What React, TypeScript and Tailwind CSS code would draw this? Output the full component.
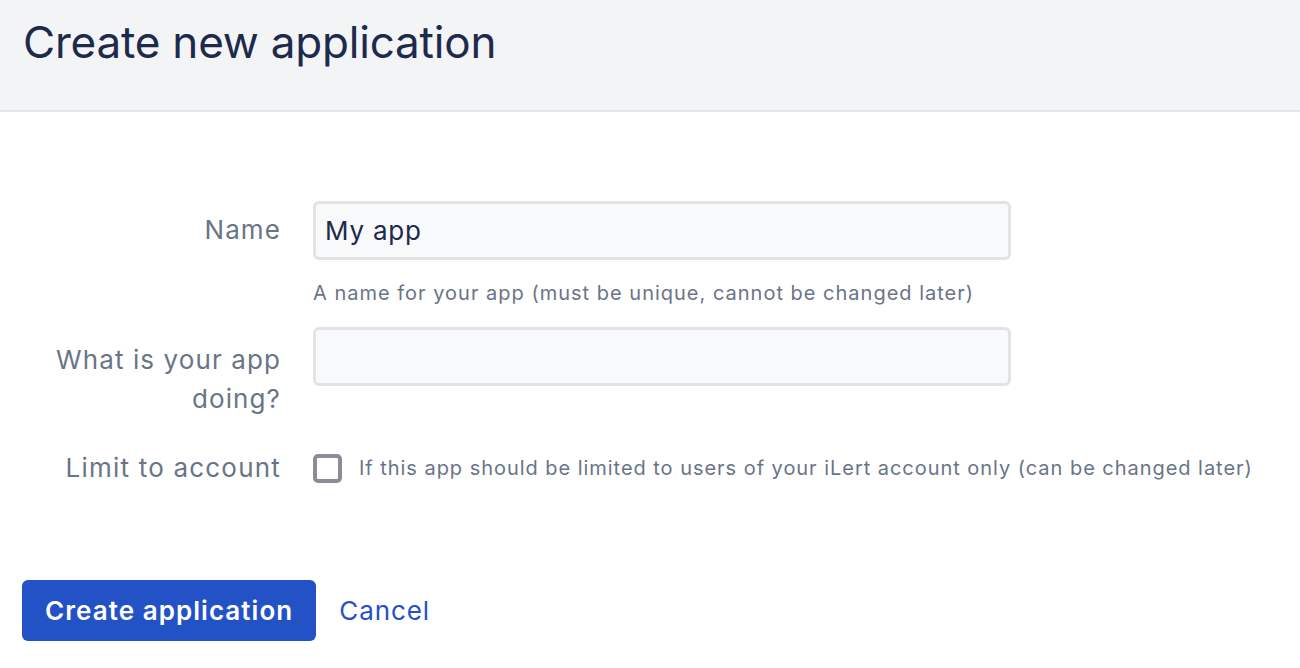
export default function App() {
  return (
    <div className="min-h-screen bg-white font-['Inter',sans-serif]">
      {/* Header */}
      <div className="h-[112px] bg-[#f3f4f6] border-b-2 border-[#e3e5e9] px-[23px] pt-[12px]">
        <h1 className="text-[44px] leading-[60px] text-[#1d2a4b] tracking-[-0.2px]">Create new application</h1>
      </div>

      {/* Form */}
      <div className="pl-[22px] pt-[89px]">
        <div className="grid grid-cols-[259px_698px] gap-x-[32px] items-start">
          <label className="text-right text-[26px] leading-[58px] tracking-[1.1px] text-[#6a7488]">Name</label>
          <div>
            <input
              defaultValue="My app"
              className="w-full h-[59px] rounded-[6px] border-[3px] border-[#e1e3e7] bg-[#f8f9fb] px-[9px] text-[26px] tracking-[0.8px] text-[#1d2a4b] outline-none"
            />
            <p className="mt-[20px] text-[20px] leading-[26px] tracking-[1px] text-[#6a7488]">
              A name for your app (must be unique, cannot be changed later)
            </p>
          </div>

          <label className="mt-[34px] text-right text-[26px] leading-[39px] tracking-[1.1px] text-[#6a7488]">
            What is your app doing?
          </label>
          <input className="mt-[21px] w-full h-[59px] rounded-[6px] border-[3px] border-[#e1e3e7] bg-[#f8f9fb] px-[10px] text-[26px] outline-none" />

          <label className="mt-[32px] text-right text-[26px] leading-[36px] tracking-[1.2px] text-[#6a7488]">Limit to account</label>
          <div className="mt-[32px] flex items-center gap-[17px] h-[36px] whitespace-nowrap">
            <span className="w-[29px] h-[29px] shrink-0 rounded-[5px] border-[4px] border-[#8b8c99] bg-white" />
            <span className="text-[20px] tracking-[0.96px] text-[#6a7488]">
              If this app should be limited to users of your iLert account only (can be changed later)
            </span>
          </div>
        </div>

        <div className="mt-[94px] flex items-center gap-[23px]">
          <button className="h-[61px] px-[23px] rounded-[6px] bg-[#2252c6] text-white text-[26px] font-semibold tracking-[1.05px]">
            Create application
          </button>
          <a className="text-[26px] tracking-[0.9px] text-[#2252c6]">Cancel</a>
        </div>
      </div>
    </div>
  );
}
